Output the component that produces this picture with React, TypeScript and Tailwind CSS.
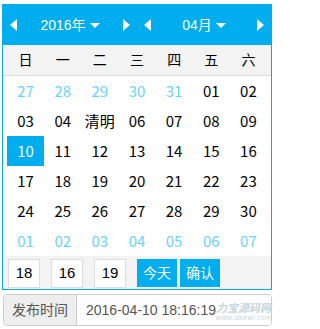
const weekdays = ['日', '一', '二', '三', '四', '五', '六'];

type Day = { label: string; muted?: boolean; active?: boolean };

const days: Day[] = [
  ...['27', '28', '29', '30', '31'].map((d) => ({ label: d, muted: true })),
  ...['01', '02', '03', '04', '清明', '06', '07', '08', '09'].map((d) => ({ label: d })),
  { label: '10', active: true },
  ...Array.from({ length: 20 }, (_, i) => ({ label: String(i + 11) })),
  ...['01', '02', '03', '04', '05', '06', '07'].map((d) => ({ label: d, muted: true })),
];

const ArrowLeft = () => (
  <span className="block w-0 h-0 border-y-[6px] border-y-transparent border-r-[7px] border-r-white" />
);
const ArrowRight = () => (
  <span className="block w-0 h-0 border-y-[6px] border-y-transparent border-l-[7px] border-l-white" />
);
const Caret = () => (
  <span className="ml-[4px] mt-[1px] block w-0 h-0 border-x-[5px] border-x-transparent border-t-[5px] border-t-white" />
);

const NavGroup = ({ label }: { label: string }) => (
  <div className="flex-1 flex items-center justify-between px-[7px]">
    <ArrowLeft />
    <div className="flex items-center">
      <span>{label}</span>
      <Caret />
    </div>
    <ArrowRight />
  </div>
);

export default function App() {
  return (
    <div
      className="relative w-[275px] h-[329px] bg-white overflow-hidden"
      style={{ fontFamily: '"Liberation Sans", "Noto Sans CJK SC", sans-serif' }}
    >
      {/* Calendar popup */}
      <div className="ml-[2px] mt-[4px] w-[270px] border border-[#00aeef] bg-white">
        <div className="h-[40px] bg-[#00aeef] flex text-white text-[14px]">
          <NavGroup label="2016年" />
          <NavGroup label="04月" />
        </div>

        <div className="h-[31px] bg-[#f3f3f3] border-b border-[#dddddd] px-[4px] grid grid-cols-7 items-center text-[14px] text-black">
          {weekdays.map((w) => (
            <span key={w} className="text-center">{w}</span>
          ))}
        </div>

        <div className="px-[4px] grid grid-cols-7 text-[15px]">
          {days.map((d, i) => (
            <div
              key={i}
              className={
                'h-[30px] flex items-center justify-center ' +
                (d.active ? 'bg-[#00aeef] text-white' : d.muted ? 'text-[#66d4ff]' : 'text-black')
              }
              style={{ fontFamily: '"Noto Sans CJK SC", sans-serif' }}
            >
              {d.label}
            </div>
          ))}
        </div>

        <div className="h-[33px] bg-[#f3f3f3] flex items-start pt-[3px] pl-[5px] text-[15px]">
          {['18', '16', '19'].map((t) => (
            <div
              key={t}
              className="mr-[11px] w-[32px] h-[29px] bg-white border border-[#dddddd] flex items-center justify-center text-black"
            >
              {t}
            </div>
          ))}
          <button className="w-[40px] h-[28px] bg-[#00aeef] text-white text-[14px]">今天</button>
          <button className="ml-[3px] w-[40px] h-[28px] bg-[#00aeef] text-white text-[14px]">确认</button>
        </div>
      </div>

      {/* Input group */}
      <div className="ml-[3px] mt-[4px] w-[269px] h-[32px] flex border border-[#cccccc] rounded-[4px] overflow-hidden text-[14px] text-[#555555]">
        <div className="w-[73px] bg-[#eeeeee] border-r border-[#cccccc] flex items-center justify-center">
          发布时间
        </div>
        <div className="flex-1 flex items-center pl-[9px] bg-white">2016-04-10 18:16:19</div>
      </div>

      {/* watermark */}
      <div className="absolute left-[216px] top-[303px] leading-none text-[#c9d4dc] italic">
        <div className="text-[11px] font-bold">力宝源码网</div>
        <div className="text-[7px] tracking-[0.5px]">www.dkewl.com</div>
      </div>
    </div>
  );
}
